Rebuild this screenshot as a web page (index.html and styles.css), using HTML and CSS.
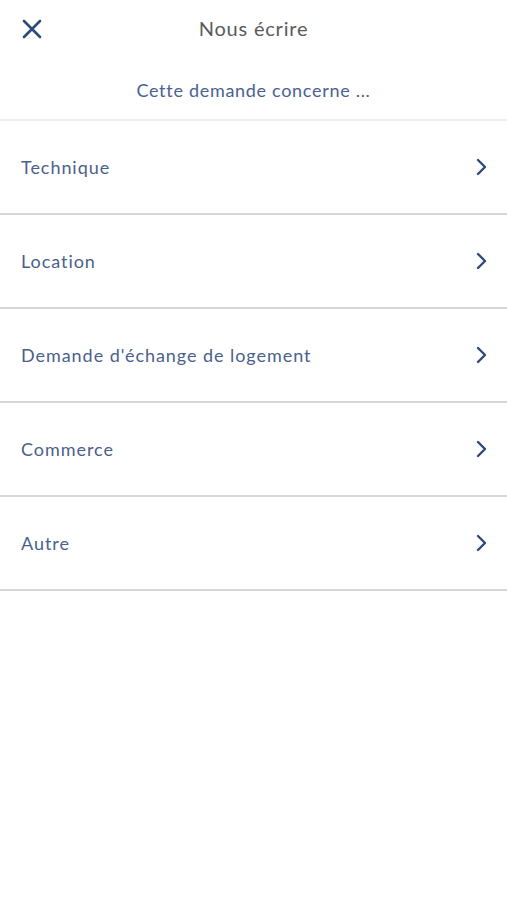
FILE: index.html
```html
<!DOCTYPE html>
<html lang="fr">
<head>
  <meta charset="UTF-8" />
  <meta name="viewport" content="width=device-width, initial-scale=1.0" />
  <title>Nous écrire</title>
  <link rel="stylesheet" href="styles.css">
</head>
<body>
  <!-- En-tête -->
  <div class="topbar">
    <div class="close-btn">
      <svg width="20" height="20" viewBox="0 0 20 20">
        <path d="M2 2 L18 18 M18 2 L2 18" stroke="#2c4a7c" stroke-width="2.6" stroke-linecap="round" fill="none"/>
      </svg>
    </div>
    <div class="title">Nous écrire</div>
  </div>

  <div class="subtitle">Cette demande concerne ...</div>

  <!-- Liste des sujets -->
  <div class="topic-list">
    <a class="topic" href="#"><span>Technique</span><svg class="chevron" width="12" height="18" viewBox="0 0 12 18"><path d="M2 2 L9 9 L2 16" stroke="#2c4a7c" stroke-width="2.4" stroke-linecap="round" stroke-linejoin="round" fill="none"/></svg></a>
    <a class="topic" href="#"><span>Location</span><svg class="chevron" width="12" height="18" viewBox="0 0 12 18"><path d="M2 2 L9 9 L2 16" stroke="#2c4a7c" stroke-width="2.4" stroke-linecap="round" stroke-linejoin="round" fill="none"/></svg></a>
    <a class="topic" href="#"><span>Demande d'échange de logement</span><svg class="chevron" width="12" height="18" viewBox="0 0 12 18"><path d="M2 2 L9 9 L2 16" stroke="#2c4a7c" stroke-width="2.4" stroke-linecap="round" stroke-linejoin="round" fill="none"/></svg></a>
    <a class="topic" href="#"><span>Commerce</span><svg class="chevron" width="12" height="18" viewBox="0 0 12 18"><path d="M2 2 L9 9 L2 16" stroke="#2c4a7c" stroke-width="2.4" stroke-linecap="round" stroke-linejoin="round" fill="none"/></svg></a>
    <a class="topic" href="#"><span>Autre</span><svg class="chevron" width="12" height="18" viewBox="0 0 12 18"><path d="M2 2 L9 9 L2 16" stroke="#2c4a7c" stroke-width="2.4" stroke-linecap="round" stroke-linejoin="round" fill="none"/></svg></a>
  </div>
</body>
</html>
```

FILE: styles.css
```css
body {
  margin: 0;
  font-family: 'Lato', 'Open Sans', sans-serif;
  background: #fff;
  color: #4b5f8c;
}

.topbar {
  position: relative;
  height: 55px;
  display: flex;
  align-items: center;
  justify-content: center;
}

.close-btn {
  position: absolute;
  left: 22px;
  top: 19px;
  width: 20px;
  height: 20px;
}

.title {
  font-size: 20px;
  letter-spacing: 0.8px;
  color: #5a5a5a;
}

.subtitle {
  text-align: center;
  font-size: 18px;
  letter-spacing: 0.7px;
  color: #4a6191;
  padding: 24px 0 18px;
  border-bottom: 2px solid #efefef;
}

.topic {
  display: flex;
  align-items: center;
  justify-content: space-between;
  height: 92px;
  padding: 0 19px 0 21px;
  border-bottom: 2px solid #d6d6d6;
  text-decoration: none;
  color: #4b5f8c;
  font-size: 18px;
  letter-spacing: 0.95px;
}
```
